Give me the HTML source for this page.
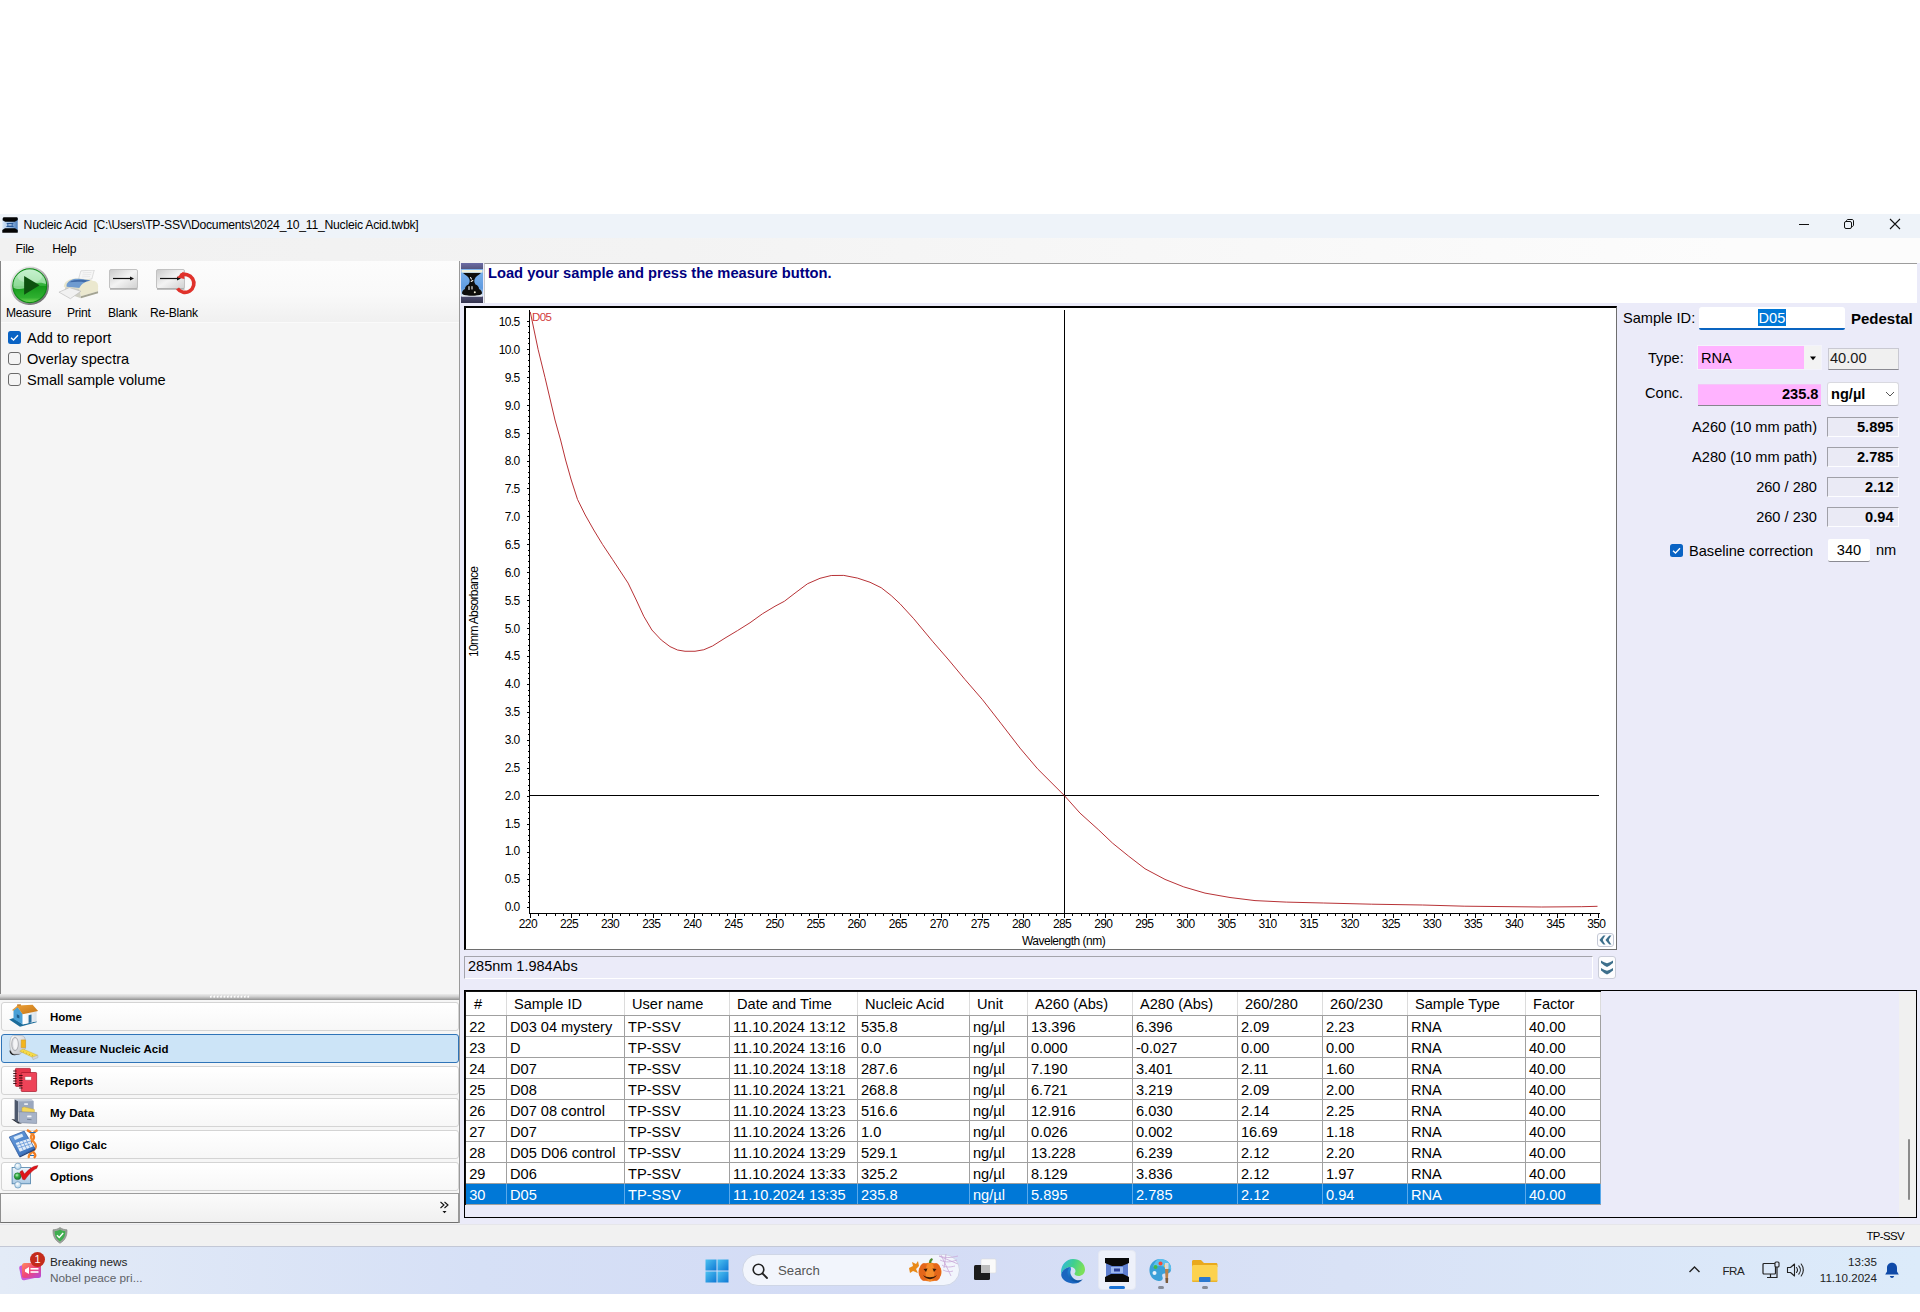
<!DOCTYPE html>
<html><head><meta charset="utf-8"><title>Nucleic Acid</title>
<style>
html,body{margin:0;padding:0;}
body{width:1920px;height:1312px;position:relative;background:#fff;overflow:hidden;font-family:"Liberation Sans",sans-serif;color:#000;}
.a{position:absolute;}
.t{position:absolute;white-space:pre;line-height:1;}
.f{font-size:14.6px;}
.b{font-weight:bold;}
.vb{position:absolute;background:#f0f0f0;border:1px solid #c9c9d2;border-bottom-color:#8a8a92;box-sizing:border-box;}
.ax{font-size:12px;letter-spacing:-0.65px;}
.nav{position:absolute;left:1px;width:458px;height:28px;border:1px solid #d4d4d4;border-radius:3px;background:linear-gradient(#ffffff,#f7f7f7);box-sizing:border-box;}
.nav span{position:absolute;left:48px;top:9px;font-size:11.5px;font-weight:bold;line-height:1;white-space:pre;}
table{border-collapse:collapse;}
</style></head><body>
<div class="a" style="left:0;top:214px;width:1920px;height:24px;background:#eef3f9"></div><div class="t" style="left:23.6px;top:219.4px;font-size:12.2px;letter-spacing:-0.24px;">Nucleic Acid&nbsp; [C:\Users\TP-SSV\Documents\2024_10_11_Nucleic Acid.twbk]</div><div class="a" style="left:0;top:238px;width:1920px;height:25px;background:linear-gradient(90deg,#f1f1f1,#f3f3f3 35%,#fcfcfc 90%)"></div><div class="t" style="left:15.6px;top:242.6px;font-size:12.2px;letter-spacing:-0.3px;">File</div><div class="t" style="left:52.3px;top:242.6px;font-size:12.2px;letter-spacing:-0.3px;">Help</div><div class="a" style="left:460px;top:263px;width:1460px;height:962px;background:#ebebf9"></div><div class="a" style="left:0;top:261px;width:460px;height:964px;background:#f5f5f5"></div><div class="a" style="left:0;top:261px;width:459px;height:61px;background:linear-gradient(#fcfcfc,#f9f9f9 55%,#f0f0f0)"></div><div class="a" style="left:0;top:322px;width:459px;height:1px;background:#fafafa"></div><div class="a" style="left:0;top:261px;width:1px;height:733px;background:#858585"></div><div class="a" style="left:459px;top:261px;width:1px;height:964px;background:#9a9a9a"></div><svg class="a" style="left:2px;top:217px" width="16" height="16" viewBox="0 0 16 16">
<defs><linearGradient id="ai" x1="0" y1="0" x2="1" y2="0"><stop offset="0" stop-color="#d6e6f8"/><stop offset="0.5" stop-color="#9dbfe6"/><stop offset="1" stop-color="#4f80bc"/></linearGradient></defs>
<rect x="0.400" y="1" width="15.300" height="14" fill="url(#ai)"/>
<path d="M1.800 0.200H14.400C15.300 0.200 15.700 0.700 15.700 1.500V3L12.800 4.800H3.200L0.600 3.200C0.600 1.500 0.900 0.200 1.800 0.200Z" fill="#040404"/>
<path d="M0.300 15.800V12.900L3 11.200H13L15.700 12.900V15.800Z" fill="#040404"/>
<path d="M4.200 6H11.800L10.600 7.300V8.700L12.200 10H3.800L5.400 8.700V7.300Z" fill="#2a5c9c"/>
<rect x="6.300" y="7.300" width="3.400" height="1.200" fill="#d6e6f8"/>
</svg><svg class="a" style="left:9.5px;top:265.5px" width="39.500" height="39.500" viewBox="0 0 42 42">
<defs><linearGradient id="gr" x1="0.15" y1="0.1" x2="0.85" y2="0.95"><stop offset="0" stop-color="#ececec"/><stop offset="0.5" stop-color="#a8a8a8"/><stop offset="1" stop-color="#6a6a6a"/></linearGradient>
<linearGradient id="gm" x1="0" y1="0" x2="0" y2="1"><stop offset="0" stop-color="#8fe0a0"/><stop offset="0.5" stop-color="#2fae36"/><stop offset="0.52" stop-color="#169a1c"/><stop offset="0.85" stop-color="#2fb030"/><stop offset="1" stop-color="#7fdc5c"/></linearGradient>
<clipPath id="gc"><circle cx="21" cy="21" r="17.500"/></clipPath></defs>
<circle cx="21" cy="21" r="20.500" fill="url(#gr)"/>
<circle cx="21" cy="21" r="18" fill="url(#gm)" stroke="#0e8a16" stroke-width="1.200"/>
<g clip-path="url(#gc)"><path d="M2 22C8 26 14 25 21 21C28 17 34 17 40 20V2H2Z" fill="#c9f5d2" opacity="0.620"/>
<ellipse cx="21" cy="11" rx="13" ry="7" fill="#fff" opacity="0.250"/></g>
<path d="M15 10.500L31.500 20.500L15 30.500Z" fill="#0d520f"/>
</svg><svg class="a" style="left:58px;top:270px" width="42" height="29.500" viewBox="0 0 44 36" preserveAspectRatio="none">
<path d="M24 1L38 0L35.500 11L21 13Z" fill="#f6f6f6" stroke="#c4c4c4" stroke-width="0.600"/>
<path d="M26 3.500L35 3M25.500 6L34.500 5.500M25 8.500L33.500 8" stroke="#dcdcdc" stroke-width="0.600"/>
<path d="M6 20C7 13 13 10 22 10.500L33 11.500L36 13L24 24L8 22Z" fill="#e9e6cc"/>
<path d="M9 18C11 12 17 10 24 11L34 12.500L23 22L9 20.500Z" fill="#6f9bd0"/>
<path d="M12 15C16 12 22 11.500 30 12.500L33 13L28 15C22 14 17 14.500 12 15Z" fill="#3f6aa8"/>
<path d="M22 23C24 16 30 13 36 13C41 13 42 17 42 20L42 26L24 32Z" fill="#ebe8cf"/>
<path d="M24 32L42 26L42 28.500L24 34.500Z" fill="#a3a392"/>
<path d="M8 21L22 23L24 32L24 34.500L6 27Z" fill="#cfcfc4"/>
<path d="M1 27L12 21.500L24 26L13 35Z" fill="#f1f1f1" stroke="#b9b9b9" stroke-width="0.700"/>
</svg><svg class="a" style="left:109px;top:269px" width="30" height="24" viewBox="0 0 30 24">
<defs><linearGradient id="gb" x1="0" y1="0" x2="1" y2="1"><stop offset="0" stop-color="#c9c9c9"/><stop offset="0.5" stop-color="#f3f3f3"/><stop offset="1" stop-color="#d0d0d0"/></linearGradient></defs>
<rect x="0.5" y="0.5" width="28" height="19" rx="1.5" fill="url(#gb)" stroke="#c2c2c2"/>
<rect x="1" y="19" width="27.5" height="2" fill="#a8a8a8" opacity="0.7"/>
<path d="M4 9.5H22" stroke="#111" stroke-width="1.2"/><path d="M21 7.5L25 9.5L21 11.5Z" fill="#111"/>
</svg><svg class="a" style="left:155.7px;top:267.6px" width="42" height="30" viewBox="0 0 42 30">
<rect x="0.5" y="1.5" width="28" height="19" rx="1.5" fill="url(#gb)" stroke="#c2c2c2"/>
<rect x="1" y="20" width="27.5" height="2" fill="#a8a8a8" opacity="0.7"/>
<path d="M4 10.5H22" stroke="#111" stroke-width="1.2"/><path d="M21 8.5L25 10.5L21 12.5Z" fill="#111"/>
<path d="M24.5 7.5A9 9 0 1 1 21.5 20.5" fill="none" stroke="#e0322b" stroke-width="3.6"/>
<path d="M21 9.5L27.5 3.5L28.5 11Z" fill="#e0322b"/>
</svg><div class="t" style="left:6px;top:306.6px;font-size:12.1px;letter-spacing:-0.25px;">Measure</div><div class="t" style="left:67px;top:306.6px;font-size:12.1px;letter-spacing:-0.25px;">Print</div><div class="t" style="left:108px;top:306.6px;font-size:12.1px;letter-spacing:-0.25px;">Blank</div><div class="t" style="left:150px;top:306.6px;font-size:12.1px;letter-spacing:-0.25px;">Re-Blank</div><svg class="a" style="left:8px;top:331px" width="13" height="13" viewBox="0 0 13 13"><rect width="13" height="13" rx="2.5" fill="#0a63c4"/><path d="M3 6.7L5.5 9L10 4.3" fill="none" stroke="#fff" stroke-width="1.3"/></svg><div class="a" style="left:8px;top:352px;width:13px;height:13px;box-sizing:border-box;border:1px solid #6a6a6a;border-radius:3px;background:#f4f4f4"></div><div class="a" style="left:8px;top:373px;width:13px;height:13px;box-sizing:border-box;border:1px solid #6a6a6a;border-radius:3px;background:#f4f4f4"></div><div class="t f" style="left:27px;top:331px;">Add to report</div><div class="t f" style="left:27px;top:352px;">Overlay spectra</div><div class="t f" style="left:27px;top:373px;">Small sample volume</div><div class="a" style="left:484px;top:263px;width:1433px;height:40px;background:#fff;border-top:1px solid #9d9d9d;border-left:1px solid #c8c8c8;box-sizing:border-box"></div><svg class="a" style="left:461px;top:263px" width="22" height="40" viewBox="0 0 22 40">
<defs><linearGradient id="pi1" x1="0" y1="0" x2="0" y2="1"><stop offset="0" stop-color="#6c6ca6"/><stop offset="1" stop-color="#56567e"/></linearGradient>
<linearGradient id="pi2" x1="0" y1="0" x2="0" y2="1"><stop offset="0" stop-color="#4c4c70"/><stop offset="1" stop-color="#34344e"/></linearGradient>
<linearGradient id="pi3" x1="0" y1="0" x2="0" y2="1"><stop offset="0" stop-color="#7fb4ee"/><stop offset="0.7" stop-color="#5f9be0"/><stop offset="1" stop-color="#dfe9f3"/></linearGradient></defs>
<rect width="22" height="6" fill="url(#pi1)"/>
<rect y="6" width="22" height="27.500" fill="url(#pi3)"/>
<rect y="33.500" width="22" height="6.500" fill="url(#pi2)"/>
<rect x="0.500" y="7" width="21" height="2.600" fill="#f1efd9"/>
<path d="M2 10H20C17 12.500 14.500 13.500 13.500 16.500C13 18.500 13.500 20 14.500 21.500C17 22.500 18 24 18 26C20 27 21 28.500 21 30C21 32 17 33 11 33C5 33 1 32 1 30C1 28.500 2 27 4 26C4 24 5 22.500 7.500 21.500C8.500 20 9 18.500 8.500 16.500C7.500 13.500 5 12.500 2 10Z" fill="#0e0d0c"/>
<path d="M9.500 14.500L10.500 16M10.200 18.500L11.800 17.500M8 23.500V26.500M11 23.500V26" stroke="#f4f4f4" stroke-width="1.100" stroke-linecap="round"/>
<circle cx="13.800" cy="29.200" r="1" fill="#f7f1d8"/>
<path d="M1 31.500C3 33.200 19 33.200 21 31.500V33.500H1Z" fill="#e9edf2"/>
</svg><div class="t b" style="left:488px;top:266px;font-size:14.7px;color:#000080;">Load your sample and press the measure button.</div><div class="a" style="left:464px;top:306px;width:1153px;height:644px;background:#fff;border-top:2px solid #000;border-left:2px solid #000;border-right:1px solid #6e6e6e;border-bottom:1px solid #6e6e6e;box-sizing:border-box"></div><svg class="a" style="left:0;top:0" width="1920" height="1312" viewBox="0 0 1920 1312" shape-rendering="crispEdges"><path d="M529.5 310V913.5H1599.5" fill="none" stroke="#000" stroke-width="1"/><path d="M527 907.5H529M528 902.5H529M528 896.5H529M528 891.5H529M528 885.5H529M527 879.5H529M528 874.5H529M528 868.5H529M528 863.5H529M528 857.5H529M527 852.5H529M528 846.5H529M528 840.5H529M528 835.5H529M528 829.5H529M527 824.5H529M528 818.5H529M528 812.5H529M528 807.5H529M528 801.5H529M527 796.5H529M528 790.5H529M528 785.5H529M528 779.5H529M528 773.5H529M527 768.5H529M528 762.5H529M528 757.5H529M528 751.5H529M528 745.5H529M527 740.5H529M528 734.5H529M528 729.5H529M528 723.5H529M528 717.5H529M527 712.5H529M528 706.5H529M528 701.5H529M528 695.5H529M528 690.5H529M527 684.5H529M528 678.5H529M528 673.5H529M528 667.5H529M528 662.5H529M527 656.5H529M528 650.5H529M528 645.5H529M528 639.5H529M528 634.5H529M527 628.5H529M528 623.5H529M528 617.5H529M528 611.5H529M528 606.5H529M527 600.5H529M528 595.5H529M528 589.5H529M528 583.5H529M528 578.5H529M527 572.5H529M528 567.5H529M528 561.5H529M528 555.5H529M528 550.5H529M527 544.5H529M528 539.5H529M528 533.5H529M528 528.5H529M528 522.5H529M527 516.5H529M528 511.5H529M528 505.5H529M528 500.5H529M528 494.5H529M527 488.5H529M528 483.5H529M528 477.5H529M528 472.5H529M528 466.5H529M527 461.5H529M528 455.5H529M528 449.5H529M528 444.5H529M528 438.5H529M527 433.5H529M528 427.5H529M528 421.5H529M528 416.5H529M528 410.5H529M527 405.5H529M528 399.5H529M528 393.5H529M528 388.5H529M528 382.5H529M527 377.5H529M528 371.5H529M528 366.5H529M528 360.5H529M528 354.5H529M527 349.5H529M528 343.5H529M528 338.5H529M528 332.5H529M528 326.5H529M527 321.5H529M530.5 914V918M538.5 914V916M546.5 914V916M555.5 914V916M563.5 914V916M571.5 914V918M579.5 914V916M587.5 914V916M596.5 914V916M604.5 914V916M612.5 914V918M620.5 914V916M629.5 914V916M637.5 914V916M645.5 914V916M653.5 914V918M661.5 914V916M670.5 914V916M678.5 914V916M686.5 914V916M694.5 914V918M702.5 914V916M711.5 914V916M719.5 914V916M727.5 914V916M735.5 914V918M744.5 914V916M752.5 914V916M760.5 914V916M768.5 914V916M776.5 914V918M785.5 914V916M793.5 914V916M801.5 914V916M809.5 914V916M818.5 914V918M826.5 914V916M834.5 914V916M842.5 914V916M850.5 914V916M859.5 914V918M867.5 914V916M875.5 914V916M883.5 914V916M892.5 914V916M900.5 914V918M908.5 914V916M916.5 914V916M924.5 914V916M933.5 914V916M941.5 914V918M949.5 914V916M957.5 914V916M965.5 914V916M974.5 914V916M982.5 914V918M990.5 914V916M998.5 914V916M1007.5 914V916M1015.5 914V916M1023.5 914V918M1031.5 914V916M1039.5 914V916M1048.5 914V916M1056.5 914V916M1064.5 914V918M1072.5 914V916M1081.5 914V916M1089.5 914V916M1097.5 914V916M1105.5 914V918M1113.5 914V916M1122.5 914V916M1130.5 914V916M1138.5 914V916M1146.5 914V918M1155.5 914V916M1163.5 914V916M1171.5 914V916M1179.5 914V916M1187.5 914V918M1196.5 914V916M1204.5 914V916M1212.5 914V916M1220.5 914V916M1228.5 914V918M1237.5 914V916M1245.5 914V916M1253.5 914V916M1261.5 914V916M1270.5 914V918M1278.5 914V916M1286.5 914V916M1294.5 914V916M1302.5 914V916M1311.5 914V918M1319.5 914V916M1327.5 914V916M1335.5 914V916M1344.5 914V916M1352.5 914V918M1360.5 914V916M1368.5 914V916M1376.5 914V916M1385.5 914V916M1393.5 914V918M1401.5 914V916M1409.5 914V916M1417.5 914V916M1426.5 914V916M1434.5 914V918M1442.5 914V916M1450.5 914V916M1459.5 914V916M1467.5 914V916M1475.5 914V918M1483.5 914V916M1491.5 914V916M1500.5 914V916M1508.5 914V916M1516.5 914V918M1524.5 914V916M1533.5 914V916M1541.5 914V916M1549.5 914V916M1557.5 914V918M1565.5 914V916M1574.5 914V916M1582.5 914V916M1590.5 914V916M1598.5 914V918" stroke="#000" stroke-width="1" fill="none"/><path d="M1064.5 310V913M530 795.5H1599" stroke="#000" stroke-width="1" fill="none"/></svg><svg class="a" style="left:0;top:0" width="1920" height="1312" viewBox="0 0 1920 1312"><polyline fill="none" stroke="#b3272b" stroke-width="0.95" points="530.25,311.9 538.1,349.4 545,377.5 555,420 560.6,440 565.6,460 571.25,480 577.5,499.4 585.25,515 593.75,530 602.5,544.4 612.5,559.4 628.1,583.1 636.25,600 643.75,616.25 651.9,630 661.25,640 670,646.6 677.5,650 685,651.25 695,651.25 703.75,649.75 712.5,646 725,638.1 737.5,630.6 750,622.75 762.5,613.75 775,606.25 784.4,601.25 795,593.1 807.5,583.75 820,578.3 831.25,575.5 843.75,575.4 857.5,578.1 870,582.25 881.25,587.75 891.25,595.6 900,603.75 913.75,618.75 932.5,641.25 948.75,660 965,679.5 982.5,699.7 1001.25,723.75 1020,748.1 1037.5,768.75 1064.4,795.6 1080,813.1 1098.75,830 1112.5,843.1 1128.75,856.25 1145,868.75 1165,879.4 1183.75,886.9 1205,893.1 1230,897.5 1255,900.6 1286.25,902.1 1323.3,903 1371.7,904.2 1422.5,905 1464.2,906.2 1541.7,907 1581.7,906.7 1597.5,906.3"/></svg><div class="t ax" style="left:478.5px;width:41px;text-align:right;top:901.0px;">0.0</div><div class="t ax" style="left:478.5px;width:41px;text-align:right;top:873.2px;">0.5</div><div class="t ax" style="left:478.5px;width:41px;text-align:right;top:845.3px;">1.0</div><div class="t ax" style="left:478.5px;width:41px;text-align:right;top:817.5px;">1.5</div><div class="t ax" style="left:478.5px;width:41px;text-align:right;top:789.6px;">2.0</div><div class="t ax" style="left:478.5px;width:41px;text-align:right;top:761.8px;">2.5</div><div class="t ax" style="left:478.5px;width:41px;text-align:right;top:733.9px;">3.0</div><div class="t ax" style="left:478.5px;width:41px;text-align:right;top:706.0px;">3.5</div><div class="t ax" style="left:478.5px;width:41px;text-align:right;top:678.2px;">4.0</div><div class="t ax" style="left:478.5px;width:41px;text-align:right;top:650.3px;">4.5</div><div class="t ax" style="left:478.5px;width:41px;text-align:right;top:622.5px;">5.0</div><div class="t ax" style="left:478.5px;width:41px;text-align:right;top:594.6px;">5.5</div><div class="t ax" style="left:478.5px;width:41px;text-align:right;top:566.8px;">6.0</div><div class="t ax" style="left:478.5px;width:41px;text-align:right;top:538.9px;">6.5</div><div class="t ax" style="left:478.5px;width:41px;text-align:right;top:511.0px;">7.0</div><div class="t ax" style="left:478.5px;width:41px;text-align:right;top:483.2px;">7.5</div><div class="t ax" style="left:478.5px;width:41px;text-align:right;top:455.3px;">8.0</div><div class="t ax" style="left:478.5px;width:41px;text-align:right;top:427.5px;">8.5</div><div class="t ax" style="left:478.5px;width:41px;text-align:right;top:399.6px;">9.0</div><div class="t ax" style="left:478.5px;width:41px;text-align:right;top:371.8px;">9.5</div><div class="t ax" style="left:478.5px;width:41px;text-align:right;top:343.9px;">10.0</div><div class="t ax" style="left:478.5px;width:41px;text-align:right;top:316.0px;">10.5</div><div class="t ax" style="left:507.9px;width:40px;text-align:center;top:918px;">220</div><div class="t ax" style="left:549.0px;width:40px;text-align:center;top:918px;">225</div><div class="t ax" style="left:590.1px;width:40px;text-align:center;top:918px;">230</div><div class="t ax" style="left:631.2px;width:40px;text-align:center;top:918px;">235</div><div class="t ax" style="left:672.3px;width:40px;text-align:center;top:918px;">240</div><div class="t ax" style="left:713.4px;width:40px;text-align:center;top:918px;">245</div><div class="t ax" style="left:754.5px;width:40px;text-align:center;top:918px;">250</div><div class="t ax" style="left:795.5px;width:40px;text-align:center;top:918px;">255</div><div class="t ax" style="left:836.6px;width:40px;text-align:center;top:918px;">260</div><div class="t ax" style="left:877.7px;width:40px;text-align:center;top:918px;">265</div><div class="t ax" style="left:918.8px;width:40px;text-align:center;top:918px;">270</div><div class="t ax" style="left:959.9px;width:40px;text-align:center;top:918px;">275</div><div class="t ax" style="left:1001.0px;width:40px;text-align:center;top:918px;">280</div><div class="t ax" style="left:1042.1px;width:40px;text-align:center;top:918px;">285</div><div class="t ax" style="left:1083.2px;width:40px;text-align:center;top:918px;">290</div><div class="t ax" style="left:1124.3px;width:40px;text-align:center;top:918px;">295</div><div class="t ax" style="left:1165.4px;width:40px;text-align:center;top:918px;">300</div><div class="t ax" style="left:1206.5px;width:40px;text-align:center;top:918px;">305</div><div class="t ax" style="left:1247.6px;width:40px;text-align:center;top:918px;">310</div><div class="t ax" style="left:1288.7px;width:40px;text-align:center;top:918px;">315</div><div class="t ax" style="left:1329.8px;width:40px;text-align:center;top:918px;">320</div><div class="t ax" style="left:1370.8px;width:40px;text-align:center;top:918px;">325</div><div class="t ax" style="left:1411.9px;width:40px;text-align:center;top:918px;">330</div><div class="t ax" style="left:1453.0px;width:40px;text-align:center;top:918px;">335</div><div class="t ax" style="left:1494.1px;width:40px;text-align:center;top:918px;">340</div><div class="t ax" style="left:1535.2px;width:40px;text-align:center;top:918px;">345</div><div class="t ax" style="left:1576.3px;width:40px;text-align:center;top:918px;">350</div><div class="t ax" style="left:1022px;top:935px;letter-spacing:-0.52px">Wavelength (nm)</div><div class="t ax" style="left:468px;top:605px;width:12px;height:12px;"><div style="position:absolute;left:0;top:0;transform-origin:0 0;transform:translate(0px,52px) rotate(-90deg);white-space:pre">10mm Absorbance</div></div><div class="t" style="left:532px;top:311.5px;font-size:11.5px;letter-spacing:-0.6px;color:#d23a3a;">D05</div><div class="a" style="left:1597px;top:933px;width:17px;height:14px;border:1px solid #c5c9d6;border-radius:3px;background:#fdfdfe;box-sizing:border-box"></div>
<svg class="a" style="left:1598px;top:934px" width="15" height="12" viewBox="0 0 15 12"><path d="M5.5 1.5C3.5 3.5 2.5 4.5 1.5 6C2.5 7.5 3.5 8.5 5.5 10.5H7.5C6 8.5 5.2 7.5 4.8 6C5.2 4.5 6 3.5 7.5 1.5ZM11.5 1.5C9.5 3.5 8.5 4.5 7.5 6C8.5 7.5 9.5 8.5 11.5 10.5H13.5C12 8.5 11.2 7.5 10.8 6C11.2 4.5 12 3.5 13.5 1.5Z" fill="#3d6f8c"/></svg><div class="a" style="left:464px;top:956px;width:1129px;height:23px;background:#ebebf9;border-top:1px solid #a4a4ac;border-left:1px solid #a4a4ac;border-bottom:1px solid #fff;border-right:1px solid #fff;box-sizing:border-box"></div><div class="t" style="left:468px;top:959px;font-size:14.5px;">285nm 1.984Abs</div><div class="a" style="left:1598px;top:956px;width:18px;height:23px;border:1px solid #c9ccd8;border-radius:3px;background:#fdfdfe;box-sizing:border-box"></div>
<svg class="a" style="left:1599px;top:957px" width="16" height="21" viewBox="0 0 16 21"><path d="M2 3.5C4.5 5 6 5.8 8 6.3C10 5.8 11.5 5 14 3.5V6C11.5 8 10 9 8 10C6 9 4.5 8 2 6ZM2 11C4.5 12.5 6 13.3 8 13.8C10 13.3 11.5 12.5 14 11V13.5C11.5 15.5 10 16.5 8 17.5C6 16.5 4.5 15.5 2 13.5Z" fill="#3d6f8c"/></svg><div class="t f" style="left:1623px;top:311px;">Sample ID:</div><div class="a" style="left:1699px;top:307px;width:146px;height:23px;background:#fff;border-bottom:2px solid #0a64c0;border-radius:3px 3px 2px 2px;box-sizing:border-box"></div><div class="a" style="left:1758px;top:309px;width:28px;height:17px;background:#0078d7"></div><div class="t f" style="left:1758.5px;top:311px;color:#fff;">D05</div><div class="t f b" style="left:1851px;top:311px;font-size:15px">Pedestal</div><div class="t f" style="left:1648px;top:351px;">Type:</div><div class="a" style="left:1697px;top:345px;width:125px;height:25px;background:#f3f3f3;border:1px solid #f3f3fb;box-sizing:border-box"></div><div class="a" style="left:1698px;top:346px;width:106px;height:23px;background:#ffb3ff"></div><div class="t f" style="left:1701px;top:351px;">RNA</div><svg class="a" style="left:1809px;top:355.5px" width="8" height="5" viewBox="0 0 8 5"><path d="M1 0.5H7L4 4.2Z" fill="#000"/></svg><div class="vb" style="left:1828px;top:348px;width:71px;height:22px;"></div><div class="t f" style="left:1830px;top:351px;color:#1a1a1a">40.00</div><div class="t f" style="left:1645px;top:386px;">Conc.</div><div class="a" style="left:1698px;top:384px;width:123px;height:22px;background:#ffb3ff;border-bottom:1px solid #86868e;border-top:1px solid #f4c6f8;box-sizing:border-box"></div><div class="t f b" style="left:1720px;width:98.5px;text-align:right;top:387px;">235.8</div><div class="a" style="left:1827px;top:382px;width:72px;height:24px;background:#fff;border:1px solid #d9d9e0;border-bottom-color:#b8b8c0;border-radius:3px;box-sizing:border-box"></div><div class="t f b" style="left:1831px;top:387px;">ng/µl</div><svg class="a" style="left:1885px;top:391px" width="10" height="6" viewBox="0 0 10 6"><path d="M1 1L5 5L9 1" fill="none" stroke="#555" stroke-width="1"/></svg><div class="t f" style="left:1660px;width:157px;text-align:right;top:420px;">A260 (10 mm path)</div><div class="vb" style="left:1827px;top:417px;width:72px;height:20px;background:#eaeaf5;border-color:#a0a0a8 #fdfdff #fdfdff #a0a0a8"></div><div class="t f b" style="left:1830px;width:63.5px;text-align:right;top:420px;">5.895</div><div class="t f" style="left:1660px;width:157px;text-align:right;top:450px;">A280 (10 mm path)</div><div class="vb" style="left:1827px;top:447px;width:72px;height:20px;background:#eaeaf5;border-color:#a0a0a8 #fdfdff #fdfdff #a0a0a8"></div><div class="t f b" style="left:1830px;width:63.5px;text-align:right;top:450px;">2.785</div><div class="t f" style="left:1660px;width:157px;text-align:right;top:480px;">260 / 280</div><div class="vb" style="left:1827px;top:477px;width:72px;height:20px;background:#eaeaf5;border-color:#a0a0a8 #fdfdff #fdfdff #a0a0a8"></div><div class="t f b" style="left:1830px;width:63.5px;text-align:right;top:480px;">2.12</div><div class="t f" style="left:1660px;width:157px;text-align:right;top:510px;">260 / 230</div><div class="vb" style="left:1827px;top:507px;width:72px;height:20px;background:#eaeaf5;border-color:#a0a0a8 #fdfdff #fdfdff #a0a0a8"></div><div class="t f b" style="left:1830px;width:63.5px;text-align:right;top:510px;">0.94</div><svg class="a" style="left:1670px;top:544px" width="13" height="13" viewBox="0 0 13 13"><rect width="13" height="13" rx="2.5" fill="#0a63c4"/><path d="M3 6.7L5.5 9L10 4.3" fill="none" stroke="#fff" stroke-width="1.3"/></svg><div class="t f" style="left:1689px;top:543.5px;">Baseline correction</div><div class="a" style="left:1828px;top:539px;width:42px;height:23px;background:#fff;border-bottom:1px solid #8a8a92;border-radius:2px;box-sizing:border-box"></div><div class="t f" style="left:1828px;width:42px;text-align:center;top:543px;">340</div><div class="t f" style="left:1876px;top:543px;">nm</div><div class="a" style="left:464px;top:990px;width:1453px;height:228px;background:#ebebf9;border:1px solid #000;box-sizing:border-box"></div><div class="a" style="left:465px;top:991px;width:1136px;height:1px;background:#111"></div><div class="a" style="left:465px;top:991px;width:1px;height:214px;background:#111"></div><div class="a" style="left:1899px;top:992px;width:17px;height:225px;background:#f0f0f0"></div><div class="a" style="left:1908px;top:1139px;width:2px;height:61px;background:#8b8b8b;border-radius:1px"></div><div class="a" style="left:466px;top:992px;width:1135px;height:213px;background:#fff"></div><div class="a" style="left:466px;top:1184px;width:1135px;height:21px;background:#0078d7"></div><div class="a" style="left:506px;top:992px;width:1px;height:23px;background:#dcdcdc"></div><div class="a" style="left:506px;top:1015px;width:1px;height:190px;background:#a0a0a0"></div><div class="a" style="left:506px;top:1184px;width:1px;height:20px;background:#5aa9ea"></div><div class="a" style="left:624px;top:992px;width:1px;height:23px;background:#dcdcdc"></div><div class="a" style="left:624px;top:1015px;width:1px;height:190px;background:#a0a0a0"></div><div class="a" style="left:624px;top:1184px;width:1px;height:20px;background:#5aa9ea"></div><div class="a" style="left:729px;top:992px;width:1px;height:23px;background:#dcdcdc"></div><div class="a" style="left:729px;top:1015px;width:1px;height:190px;background:#a0a0a0"></div><div class="a" style="left:729px;top:1184px;width:1px;height:20px;background:#5aa9ea"></div><div class="a" style="left:857px;top:992px;width:1px;height:23px;background:#dcdcdc"></div><div class="a" style="left:857px;top:1015px;width:1px;height:190px;background:#a0a0a0"></div><div class="a" style="left:857px;top:1184px;width:1px;height:20px;background:#5aa9ea"></div><div class="a" style="left:969px;top:992px;width:1px;height:23px;background:#dcdcdc"></div><div class="a" style="left:969px;top:1015px;width:1px;height:190px;background:#a0a0a0"></div><div class="a" style="left:969px;top:1184px;width:1px;height:20px;background:#5aa9ea"></div><div class="a" style="left:1027px;top:992px;width:1px;height:23px;background:#dcdcdc"></div><div class="a" style="left:1027px;top:1015px;width:1px;height:190px;background:#a0a0a0"></div><div class="a" style="left:1027px;top:1184px;width:1px;height:20px;background:#5aa9ea"></div><div class="a" style="left:1132px;top:992px;width:1px;height:23px;background:#dcdcdc"></div><div class="a" style="left:1132px;top:1015px;width:1px;height:190px;background:#a0a0a0"></div><div class="a" style="left:1132px;top:1184px;width:1px;height:20px;background:#5aa9ea"></div><div class="a" style="left:1237px;top:992px;width:1px;height:23px;background:#dcdcdc"></div><div class="a" style="left:1237px;top:1015px;width:1px;height:190px;background:#a0a0a0"></div><div class="a" style="left:1237px;top:1184px;width:1px;height:20px;background:#5aa9ea"></div><div class="a" style="left:1322px;top:992px;width:1px;height:23px;background:#dcdcdc"></div><div class="a" style="left:1322px;top:1015px;width:1px;height:190px;background:#a0a0a0"></div><div class="a" style="left:1322px;top:1184px;width:1px;height:20px;background:#5aa9ea"></div><div class="a" style="left:1407px;top:992px;width:1px;height:23px;background:#dcdcdc"></div><div class="a" style="left:1407px;top:1015px;width:1px;height:190px;background:#a0a0a0"></div><div class="a" style="left:1407px;top:1184px;width:1px;height:20px;background:#5aa9ea"></div><div class="a" style="left:1525px;top:992px;width:1px;height:23px;background:#dcdcdc"></div><div class="a" style="left:1525px;top:1015px;width:1px;height:190px;background:#a0a0a0"></div><div class="a" style="left:1525px;top:1184px;width:1px;height:20px;background:#5aa9ea"></div><div class="a" style="left:1600px;top:992px;width:1px;height:23px;background:#dcdcdc"></div><div class="a" style="left:1600px;top:1015px;width:1px;height:190px;background:#a0a0a0"></div><div class="a" style="left:1600px;top:1184px;width:1px;height:20px;background:#5aa9ea"></div><div class="a" style="left:466px;top:1015px;width:1135px;height:1px;background:#a0a0a0"></div><div class="a" style="left:466px;top:1036px;width:1135px;height:1px;background:#a0a0a0"></div><div class="a" style="left:466px;top:1057px;width:1135px;height:1px;background:#a0a0a0"></div><div class="a" style="left:466px;top:1078px;width:1135px;height:1px;background:#a0a0a0"></div><div class="a" style="left:466px;top:1099px;width:1135px;height:1px;background:#a0a0a0"></div><div class="a" style="left:466px;top:1120px;width:1135px;height:1px;background:#a0a0a0"></div><div class="a" style="left:466px;top:1141px;width:1135px;height:1px;background:#a0a0a0"></div><div class="a" style="left:466px;top:1162px;width:1135px;height:1px;background:#a0a0a0"></div><div class="a" style="left:466px;top:1183px;width:1135px;height:1px;background:#a0a0a0"></div><div class="a" style="left:466px;top:1204px;width:1135px;height:1px;background:#a0a0a0"></div><div class="t f" style="left:474px;top:997px;">#</div><div class="t f" style="left:514px;top:997px;">Sample ID</div><div class="t f" style="left:632px;top:997px;">User name</div><div class="t f" style="left:737px;top:997px;">Date and Time</div><div class="t f" style="left:865px;top:997px;">Nucleic Acid</div><div class="t f" style="left:977px;top:997px;">Unit</div><div class="t f" style="left:1035px;top:997px;">A260 (Abs)</div><div class="t f" style="left:1140px;top:997px;">A280 (Abs)</div><div class="t f" style="left:1245px;top:997px;">260/280</div><div class="t f" style="left:1330px;top:997px;">260/230</div><div class="t f" style="left:1415px;top:997px;">Sample Type</div><div class="t f" style="left:1533px;top:997px;">Factor</div><div class="t f" style="left:469.2px;top:1020px;color:#000">22</div><div class="t f" style="left:510px;top:1020px;color:#000">D03 04 mystery</div><div class="t f" style="left:628px;top:1020px;color:#000">TP-SSV</div><div class="t f" style="left:733px;top:1020px;color:#000">11.10.2024 13:12</div><div class="t f" style="left:861px;top:1020px;color:#000">535.8</div><div class="t f" style="left:973px;top:1020px;color:#000">ng/µl</div><div class="t f" style="left:1031px;top:1020px;color:#000">13.396</div><div class="t f" style="left:1136px;top:1020px;color:#000">6.396</div><div class="t f" style="left:1241px;top:1020px;color:#000">2.09</div><div class="t f" style="left:1326px;top:1020px;color:#000">2.23</div><div class="t f" style="left:1411px;top:1020px;color:#000">RNA</div><div class="t f" style="left:1529px;top:1020px;color:#000">40.00</div><div class="t f" style="left:469.2px;top:1041px;color:#000">23</div><div class="t f" style="left:510px;top:1041px;color:#000">D</div><div class="t f" style="left:628px;top:1041px;color:#000">TP-SSV</div><div class="t f" style="left:733px;top:1041px;color:#000">11.10.2024 13:16</div><div class="t f" style="left:861px;top:1041px;color:#000">0.0</div><div class="t f" style="left:973px;top:1041px;color:#000">ng/µl</div><div class="t f" style="left:1031px;top:1041px;color:#000">0.000</div><div class="t f" style="left:1136px;top:1041px;color:#000">-0.027</div><div class="t f" style="left:1241px;top:1041px;color:#000">0.00</div><div class="t f" style="left:1326px;top:1041px;color:#000">0.00</div><div class="t f" style="left:1411px;top:1041px;color:#000">RNA</div><div class="t f" style="left:1529px;top:1041px;color:#000">40.00</div><div class="t f" style="left:469.2px;top:1062px;color:#000">24</div><div class="t f" style="left:510px;top:1062px;color:#000">D07</div><div class="t f" style="left:628px;top:1062px;color:#000">TP-SSV</div><div class="t f" style="left:733px;top:1062px;color:#000">11.10.2024 13:18</div><div class="t f" style="left:861px;top:1062px;color:#000">287.6</div><div class="t f" style="left:973px;top:1062px;color:#000">ng/µl</div><div class="t f" style="left:1031px;top:1062px;color:#000">7.190</div><div class="t f" style="left:1136px;top:1062px;color:#000">3.401</div><div class="t f" style="left:1241px;top:1062px;color:#000">2.11</div><div class="t f" style="left:1326px;top:1062px;color:#000">1.60</div><div class="t f" style="left:1411px;top:1062px;color:#000">RNA</div><div class="t f" style="left:1529px;top:1062px;color:#000">40.00</div><div class="t f" style="left:469.2px;top:1083px;color:#000">25</div><div class="t f" style="left:510px;top:1083px;color:#000">D08</div><div class="t f" style="left:628px;top:1083px;color:#000">TP-SSV</div><div class="t f" style="left:733px;top:1083px;color:#000">11.10.2024 13:21</div><div class="t f" style="left:861px;top:1083px;color:#000">268.8</div><div class="t f" style="left:973px;top:1083px;color:#000">ng/µl</div><div class="t f" style="left:1031px;top:1083px;color:#000">6.721</div><div class="t f" style="left:1136px;top:1083px;color:#000">3.219</div><div class="t f" style="left:1241px;top:1083px;color:#000">2.09</div><div class="t f" style="left:1326px;top:1083px;color:#000">2.00</div><div class="t f" style="left:1411px;top:1083px;color:#000">RNA</div><div class="t f" style="left:1529px;top:1083px;color:#000">40.00</div><div class="t f" style="left:469.2px;top:1104px;color:#000">26</div><div class="t f" style="left:510px;top:1104px;color:#000">D07 08 control</div><div class="t f" style="left:628px;top:1104px;color:#000">TP-SSV</div><div class="t f" style="left:733px;top:1104px;color:#000">11.10.2024 13:23</div><div class="t f" style="left:861px;top:1104px;color:#000">516.6</div><div class="t f" style="left:973px;top:1104px;color:#000">ng/µl</div><div class="t f" style="left:1031px;top:1104px;color:#000">12.916</div><div class="t f" style="left:1136px;top:1104px;color:#000">6.030</div><div class="t f" style="left:1241px;top:1104px;color:#000">2.14</div><div class="t f" style="left:1326px;top:1104px;color:#000">2.25</div><div class="t f" style="left:1411px;top:1104px;color:#000">RNA</div><div class="t f" style="left:1529px;top:1104px;color:#000">40.00</div><div class="t f" style="left:469.2px;top:1125px;color:#000">27</div><div class="t f" style="left:510px;top:1125px;color:#000">D07</div><div class="t f" style="left:628px;top:1125px;color:#000">TP-SSV</div><div class="t f" style="left:733px;top:1125px;color:#000">11.10.2024 13:26</div><div class="t f" style="left:861px;top:1125px;color:#000">1.0</div><div class="t f" style="left:973px;top:1125px;color:#000">ng/µl</div><div class="t f" style="left:1031px;top:1125px;color:#000">0.026</div><div class="t f" style="left:1136px;top:1125px;color:#000">0.002</div><div class="t f" style="left:1241px;top:1125px;color:#000">16.69</div><div class="t f" style="left:1326px;top:1125px;color:#000">1.18</div><div class="t f" style="left:1411px;top:1125px;color:#000">RNA</div><div class="t f" style="left:1529px;top:1125px;color:#000">40.00</div><div class="t f" style="left:469.2px;top:1146px;color:#000">28</div><div class="t f" style="left:510px;top:1146px;color:#000">D05 D06 control</div><div class="t f" style="left:628px;top:1146px;color:#000">TP-SSV</div><div class="t f" style="left:733px;top:1146px;color:#000">11.10.2024 13:29</div><div class="t f" style="left:861px;top:1146px;color:#000">529.1</div><div class="t f" style="left:973px;top:1146px;color:#000">ng/µl</div><div class="t f" style="left:1031px;top:1146px;color:#000">13.228</div><div class="t f" style="left:1136px;top:1146px;color:#000">6.239</div><div class="t f" style="left:1241px;top:1146px;color:#000">2.12</div><div class="t f" style="left:1326px;top:1146px;color:#000">2.20</div><div class="t f" style="left:1411px;top:1146px;color:#000">RNA</div><div class="t f" style="left:1529px;top:1146px;color:#000">40.00</div><div class="t f" style="left:469.2px;top:1167px;color:#000">29</div><div class="t f" style="left:510px;top:1167px;color:#000">D06</div><div class="t f" style="left:628px;top:1167px;color:#000">TP-SSV</div><div class="t f" style="left:733px;top:1167px;color:#000">11.10.2024 13:33</div><div class="t f" style="left:861px;top:1167px;color:#000">325.2</div><div class="t f" style="left:973px;top:1167px;color:#000">ng/µl</div><div class="t f" style="left:1031px;top:1167px;color:#000">8.129</div><div class="t f" style="left:1136px;top:1167px;color:#000">3.836</div><div class="t f" style="left:1241px;top:1167px;color:#000">2.12</div><div class="t f" style="left:1326px;top:1167px;color:#000">1.97</div><div class="t f" style="left:1411px;top:1167px;color:#000">RNA</div><div class="t f" style="left:1529px;top:1167px;color:#000">40.00</div><div class="t f" style="left:469.2px;top:1188px;color:#fff">30</div><div class="t f" style="left:510px;top:1188px;color:#fff">D05</div><div class="t f" style="left:628px;top:1188px;color:#fff">TP-SSV</div><div class="t f" style="left:733px;top:1188px;color:#fff">11.10.2024 13:35</div><div class="t f" style="left:861px;top:1188px;color:#fff">235.8</div><div class="t f" style="left:973px;top:1188px;color:#fff">ng/µl</div><div class="t f" style="left:1031px;top:1188px;color:#fff">5.895</div><div class="t f" style="left:1136px;top:1188px;color:#fff">2.785</div><div class="t f" style="left:1241px;top:1188px;color:#fff">2.12</div><div class="t f" style="left:1326px;top:1188px;color:#fff">0.94</div><div class="t f" style="left:1411px;top:1188px;color:#fff">RNA</div><div class="t f" style="left:1529px;top:1188px;color:#fff">40.00</div><div class="a" style="left:0;top:994px;width:459px;height:6px;background:linear-gradient(#ececec,#cfcfcf 45%,#929292)"></div><div class="a" style="left:0;top:1000px;width:459px;height:225px;background:#f6f6f6"></div><svg class="a" style="left:209px;top:995px" width="42" height="4" viewBox="0 0 42 4"><rect x="1.0" y="1" width="1.6" height="1.6" fill="#fff"/><rect x="1.8" y="0.3" width="1" height="1" fill="#f4f4f4"/><rect x="4.4" y="1" width="1.6" height="1.6" fill="#fff"/><rect x="5.2" y="0.3" width="1" height="1" fill="#f4f4f4"/><rect x="7.8" y="1" width="1.6" height="1.6" fill="#fff"/><rect x="8.6" y="0.3" width="1" height="1" fill="#f4f4f4"/><rect x="11.2" y="1" width="1.6" height="1.6" fill="#fff"/><rect x="12.0" y="0.3" width="1" height="1" fill="#f4f4f4"/><rect x="14.6" y="1" width="1.6" height="1.6" fill="#fff"/><rect x="15.4" y="0.3" width="1" height="1" fill="#f4f4f4"/><rect x="18.0" y="1" width="1.6" height="1.6" fill="#fff"/><rect x="18.8" y="0.3" width="1" height="1" fill="#f4f4f4"/><rect x="21.4" y="1" width="1.6" height="1.6" fill="#fff"/><rect x="22.2" y="0.3" width="1" height="1" fill="#f4f4f4"/><rect x="24.8" y="1" width="1.6" height="1.6" fill="#fff"/><rect x="25.6" y="0.3" width="1" height="1" fill="#f4f4f4"/><rect x="28.2" y="1" width="1.6" height="1.6" fill="#fff"/><rect x="29.0" y="0.3" width="1" height="1" fill="#f4f4f4"/><rect x="31.6" y="1" width="1.6" height="1.6" fill="#fff"/><rect x="32.4" y="0.3" width="1" height="1" fill="#f4f4f4"/><rect x="35.0" y="1" width="1.6" height="1.6" fill="#fff"/><rect x="35.8" y="0.3" width="1" height="1" fill="#f4f4f4"/><rect x="38.4" y="1" width="1.6" height="1.6" fill="#fff"/><rect x="39.2" y="0.3" width="1" height="1" fill="#f4f4f4"/></svg><div class="nav" style="top:1002px;height:29px;"><span>Home</span></div><div class="nav" style="top:1034px;height:29px;background:#cce4f7;border-color:#2f74b8;"><span>Measure Nucleic Acid</span></div><div class="nav" style="top:1066px;height:29px;"><span>Reports</span></div><div class="nav" style="top:1098px;height:29px;"><span>My Data</span></div><div class="nav" style="top:1130px;height:29px;"><span>Oligo Calc</span></div><div class="nav" style="top:1162px;height:29px;"><span>Options</span></div><svg class="a" style="left:0;top:1000px" width="50" height="195" viewBox="0 1000 50 195">
<defs>
<linearGradient id="hr" x1="0" y1="0" x2="1" y2="1"><stop offset="0" stop-color="#f0a53a"/><stop offset="1" stop-color="#c47416"/></linearGradient>
<linearGradient id="hw" x1="0" y1="0" x2="1" y2="0"><stop offset="0" stop-color="#ffffff"/><stop offset="1" stop-color="#d9e2ea"/></linearGradient>
<linearGradient id="tb" x1="0" y1="0" x2="1" y2="1"><stop offset="0" stop-color="#ffffff"/><stop offset="1" stop-color="#b9bcc2"/></linearGradient>
<linearGradient id="cb" x1="0" y1="0" x2="1" y2="1"><stop offset="0" stop-color="#6ea3e2"/><stop offset="1" stop-color="#2f66b4"/></linearGradient>
<linearGradient id="op" x1="0" y1="0" x2="0" y2="1"><stop offset="0" stop-color="#eef5fb"/><stop offset="1" stop-color="#a9c9e4"/></linearGradient>
<radialGradient id="og" cx="40%" cy="35%" r="65%"><stop offset="0" stop-color="#bff0c0"/><stop offset="0.45" stop-color="#35b045"/><stop offset="1" stop-color="#15752a"/></radialGradient>
<radialGradient id="ob" cx="40%" cy="35%" r="65%"><stop offset="0" stop-color="#ffffff"/><stop offset="1" stop-color="#a9cfe8"/></radialGradient>
</defs>
<!-- Home -->
<path d="M9.200 1019.400L13.500 1018L22.700 1024.200L36.600 1021.200L36.600 1022.200L20 1026.700Z" fill="#1c6c9a"/>
<path d="M13.500 1009.900L17.600 1007L22.700 1013.900L22.700 1024.300L13.500 1019Z" fill="#4aa0d6"/>
<path d="M16.800 1014.300L19.400 1015.600L19.400 1018.600L16.800 1017.400Z" fill="#1f5f8e"/>
<path d="M22.700 1013.900L36.600 1011L36.600 1021.200L22.700 1024.500Z" fill="url(#hw)"/>
<path d="M28.600 1015.200L31.500 1014.600L31.500 1022.400L28.600 1023.100Z" fill="#2a6f9e"/>
<path d="M17.200 1004.400H20.900V1007.600H17.200Z" fill="#b8680f"/>
<path d="M12.100 1009.900L17.600 1005.500L32.600 1004.800L38.100 1011L22.700 1014.300L17.600 1007.200L13.200 1010.800Z" fill="url(#hr)"/>
<!-- Tape measure -->
<path d="M9.500 1050.500C9.500 1053.500 11.500 1055.300 14.500 1055.300L19.500 1054.500L18 1050Z" fill="#1a1a1a"/>
<path d="M13.500 1035.600L21.500 1035.600C24 1035.600 25.300 1037.500 25.300 1040.500L25.300 1049L20 1054.200L14.500 1054.200C11.500 1054.200 9.900 1050 9.900 1044.500C9.900 1039 11.200 1035.600 13.500 1035.600Z" fill="url(#tb)" stroke="#9a9ca2" stroke-width="0.500"/>
<ellipse cx="15" cy="1044" rx="3.300" ry="6.800" fill="#d9dade" stroke="#8e9096" stroke-width="0.600"/>
<ellipse cx="15.400" cy="1044" rx="2.200" ry="5.400" fill="#f4f4f6"/>
<path d="M21.200 1039.900H25.600V1047.600H21.200Z" fill="#f4b51c" stroke="#c98d10" stroke-width="0.400"/>
<path d="M19.800 1051.200L23 1049L37.600 1055.200L33.500 1057.800Z" fill="#f6da48" stroke="#c9a820" stroke-width="0.400"/>
<path d="M24 1051.500L22.800 1052.500M27 1052.800L25.800 1053.800M30 1054.100L28.800 1055.100M33 1055.300L31.800 1056.300" stroke="#a8871a" stroke-width="0.500"/>
<path d="M32.200 1057.200L37.800 1055.200L38 1057.600L33 1059.600Z" fill="#d4d6da" stroke="#9a9ca2" stroke-width="0.400"/>
<!-- Reports -->
<rect x="15.400" y="1068.400" width="15" height="18" rx="0.800" fill="#e5344a" stroke="#a31628" stroke-width="0.700"/>
<path d="M13.200 1071H16.600M13.200 1073.500H16.600M13.200 1076H16.600M13.200 1078.500H16.600M13.200 1081H16.600M13.200 1083.500H16.600" stroke="#3a0a10" stroke-width="0.900"/>
<rect x="21.200" y="1072.500" width="15.400" height="19" rx="0.800" fill="#ee4358" stroke="#a31628" stroke-width="0.700"/>
<rect x="24.900" y="1076.500" width="6.600" height="3.700" rx="0.800" fill="#fff" stroke="#b02a3a" stroke-width="0.500"/>
<path d="M19 1075.500H22.600M19 1078H22.600M19 1080.500H22.600M19 1083H22.600M19 1085.500H22.600M19 1088H22.600" stroke="#3a0a10" stroke-width="0.900"/>
<!-- My Data -->
<path d="M11.300 1119L14.600 1119.500L21.900 1123.400L18 1123.400Z" fill="#20242c"/>
<path d="M14.600 1099.300L18.300 1101.100L18.300 1123.100L14.600 1120.200Z" fill="#4d586c"/>
<path d="M14.600 1099.300L31.500 1098.900L33.700 1101.100L18.300 1101.500Z" fill="#c0c9d8"/>
<path d="M18.300 1101.300L33.700 1101.100L33.700 1112L18.300 1112.200Z" fill="#9aa7be"/>
<rect x="24.200" y="1103.300" width="3.700" height="1.600" fill="#f2f4f7"/>
<path d="M22 1107.700L24.200 1107L34.400 1109.500L34.400 1112.500L22 1112.500Z" fill="#f5d85c" stroke="#c9a62a" stroke-width="0.400"/>
<path d="M19.400 1111.700L36.600 1112.500L36.600 1123.500L19.400 1122.700Z" fill="#a7b3c8" stroke="#6a778e" stroke-width="0.500"/>
<rect x="27.100" y="1115.400" width="4.400" height="1.900" rx="0.500" fill="#f2f4f7"/>
<path d="M27.100 1119.300L31.500 1119.700" stroke="#6a778e" stroke-width="0.800"/>
<!-- Oligo Calc -->
<path d="M27 1130C34 1134 36 1137 32 1141C28 1145 28 1148 33 1152C36 1154.500 36 1156 34 1158" fill="none" stroke="#f07a20" stroke-width="2.300"/>
<path d="M37.500 1130C31 1134 29 1137 33 1141C37 1145 37 1148 32 1152C29 1154.500 28 1156 29 1158" fill="none" stroke="#f28a30" stroke-width="2.300"/>
<path d="M29.500 1132.500H35.500M30.500 1149.500H35M30 1155.500H34" stroke="#2a6fb5" stroke-width="1.200"/>
<path d="M9.200 1137.600L10.200 1139.800L20 1157.200L19.400 1156.400Z" fill="#1f3f7a"/>
<path d="M9.200 1137L24.200 1131.100L35.100 1148.700L19.400 1156.400Z" fill="url(#cb)" stroke="#1f4a90" stroke-width="0.600"/>
<path d="M19.400 1156.400L35.100 1148.700L35.300 1149.900L19.800 1157.600Z" fill="#1f3f7a"/>
<path d="M13.500 1137L22 1133.700L23.400 1136.600L15 1140Z" fill="#dcebf9"/>
<path d="M15.700 1142.900L29.300 1138.500L33 1146.500L19.800 1151.700Z" fill="#eef4fb" opacity="0.920"/>
<path d="M17 1145.400L30.400 1141M18.300 1148L31.700 1143.600M19.200 1141.800L23.300 1150.400M22.600 1140.700L26.700 1149.100M26 1139.600L30 1147.800" stroke="#5a8fd6" stroke-width="0.700"/>
<!-- Options -->
<rect x="12.100" y="1167.400" width="18.300" height="16.400" fill="url(#op)" stroke="#4a7fa8" stroke-width="0.800"/>
<circle cx="17.900" cy="1166.300" r="3.200" fill="url(#ob)" stroke="#5a8ab0" stroke-width="0.600"/>
<circle cx="17.900" cy="1184.900" r="3.200" fill="url(#ob)" stroke="#5a8ab0" stroke-width="0.600"/>
<circle cx="17.600" cy="1176.200" r="3.400" fill="url(#og)" stroke="#1a6a2a" stroke-width="0.500"/>
<path d="M19.800 1172.100L22.300 1170.300L24.500 1174C27.500 1170.500 31 1167.500 34.400 1166.300L38 1165.500L36.600 1168.500C33.500 1169.500 29 1174 24.900 1179.800L22.700 1179.400Z" fill="#df151a" stroke="#9a0c10" stroke-width="0.400"/>
</svg><div class="a" style="left:0;top:1193px;width:459px;height:30px;background:linear-gradient(#fbfbfb,#f0f0f0);border:1px solid #8f8f8f;border-bottom-color:#707070;border-top-color:#9c9c9c;border-right-color:#9a9a9a;box-sizing:border-box"></div><svg class="a" style="left:439px;top:1201px" width="11" height="13" viewBox="0 0 11 13"><path d="M1.5 1L5 4L1.5 7M5.5 1L9 4L5.5 7" fill="none" stroke="#111" stroke-width="1.1"/><path d="M3.5 10H7.5L5.5 12.3Z" fill="#111"/></svg><div class="a" style="left:0;top:1223px;width:460px;height:3px;background:#f1f1f1"></div><div class="a" style="left:0;top:1224px;width:1920px;height:22px;background:#f1f1f1;border-top:1px solid #e6e6ea;box-sizing:border-box"></div><svg class="a" style="left:52px;top:1227px" width="16" height="17" viewBox="0 0 16 17"><path d="M8 0.5C10 2 12.5 2.7 15 2.8C15.3 9 13 13.5 8 16.3C3 13.5 0.7 9 1 2.8C3.5 2.7 6 2 8 0.5Z" fill="#9aa19a" stroke="#7b827b" stroke-width="0.6"/><path d="M8 2.4C9.7 3.5 11.5 4 13.4 4.2C13.5 8.8 11.8 12.2 8 14.4C4.2 12.2 2.5 8.8 2.6 4.2C4.5 4 6.3 3.5 8 2.4Z" fill="#3fae4f"/><path d="M5 8.3L7.2 10.4L11.2 6" fill="none" stroke="#fff" stroke-width="1.4"/></svg><div class="t" style="left:1866.5px;top:1231px;font-size:11.4px;letter-spacing:-0.6px">TP-SSV</div><div class="a" style="left:0;top:1246px;width:1920px;height:48px;background:linear-gradient(90deg,#e3ebf7 0%,#d6e0f6 25%,#d3dbf5 45%,#d9e2f6 70%,#dcebfa 100%);border-top:1px solid #c3c8d6;box-sizing:border-box"></div><svg class="a" style="left:18px;top:1251px" width="30" height="34" viewBox="0 0 30 34">
<defs><linearGradient id="nw" x1="0" y1="0" x2="1" y2="1"><stop offset="0" stop-color="#ff8a5c"/><stop offset="0.5" stop-color="#f0457a"/><stop offset="1" stop-color="#b14ae0"/></linearGradient></defs>
<rect x="2" y="13" width="18" height="15" rx="2.5" fill="#c85ad8" transform="rotate(-12 11 20)"/>
<rect x="4" y="12" width="19" height="15" rx="2.5" fill="url(#nw)"/>
<path d="M7 18.5L11 16V23L7 20.8Z" fill="#fff"/><rect x="12.5" y="17" width="8" height="1.6" fill="#fff"/><rect x="12.5" y="20.2" width="8" height="1.6" fill="#fff"/>
<circle cx="19.5" cy="8.5" r="7.5" fill="#c42b1c"/>
</svg><div class="t" style="left:34.5px;top:1254px;font-size:11px;color:#fff;">1</div><div class="t" style="left:50px;top:1257px;font-size:11.8px;color:#222;">Breaking news</div><div class="t" style="left:50px;top:1273px;font-size:11.8px;color:#5f6368;">Nobel peace pri...</div><svg class="a" style="left:704.5px;top:1258.5px" width="24" height="24" viewBox="0 0 24 24">
<defs><linearGradient id="wl" x1="0" y1="0" x2="1" y2="1"><stop offset="0" stop-color="#4cc2f1"/><stop offset="1" stop-color="#0f78d4"/></linearGradient></defs>
<rect x="0.5" y="0.5" width="11" height="11" fill="url(#wl)"/><rect x="12.5" y="0.5" width="11" height="11" fill="url(#wl)"/><rect x="0.5" y="12.5" width="11" height="11" fill="url(#wl)"/><rect x="12.5" y="12.5" width="11" height="11" fill="url(#wl)"/></svg><div class="a" style="left:742px;top:1254px;width:218px;height:32px;border-radius:16px;background:#f2f5fc;border:1px solid #cfd6e6;box-sizing:border-box"></div><svg class="a" style="left:751px;top:1262px" width="18" height="18" viewBox="0 0 18 18"><circle cx="7.5" cy="7.5" r="5.3" fill="none" stroke="#222" stroke-width="1.6"/><path d="M11.5 11.5L16 16" stroke="#222" stroke-width="1.8" stroke-linecap="round"/></svg><div class="t" style="left:778px;top:1264px;font-size:13.2px;color:#555;">Search</div><svg class="a" style="left:906px;top:1254px" width="56" height="32" viewBox="0 0 56 32">
<path d="M3 14L7 12L6 8L10 10L12 7L13 12L10 15L12 19L7 17L4 19Z" fill="#e98a1a"/>
<ellipse cx="24" cy="18" rx="11.5" ry="9.5" fill="#f07a1c"/><ellipse cx="18" cy="18" rx="5" ry="9" fill="#e4661a"/><ellipse cx="30" cy="18" rx="5" ry="9" fill="#e4661a"/><ellipse cx="24" cy="18" rx="4.5" ry="9.5" fill="#f58b2a"/>
<path d="M23 9C23 6 24 5 26 4L27 6C25.5 6.5 25.3 8 25.3 9Z" fill="#4c8a2a"/>
<path d="M17.5 15L21.5 14.5L20 18ZM30.5 15L26.5 14.5L28 18ZM17 21C21 24 27 24 31 21C28 26.5 20 26.5 17 21Z" fill="#3a1a08"/>
<path d="M33 2L52 10M35 1L45 22M40 0L38 14M33 2C39 4 44 4 52 2M34 6C40 9 45 8 51 6M36 11C40 14 45 13 49 12M37 16C41 18 44 18 47 17" fill="none" stroke="#c9a8d8" stroke-width="0.8"/>
</svg><svg class="a" style="left:972px;top:1258px" width="26" height="24" viewBox="0 0 26 24"><rect x="9" y="1" width="15" height="14" rx="1.5" fill="#fafafa" stroke="#dcdcdc" stroke-width="0.6"/><rect x="2" y="7" width="16" height="15" rx="1.5" fill="#1c1c1c"/><rect x="9" y="7" width="9" height="8" fill="#bdbdbd"/></svg><svg class="a" style="left:1060px;top:1258px" width="26" height="26" viewBox="0 0 26 26">
<defs><linearGradient id="e1" x1="0" y1="0" x2="0.6" y2="1"><stop offset="0" stop-color="#2a8fe0"/><stop offset="1" stop-color="#0c4f9e"/></linearGradient><linearGradient id="e2" x1="0" y1="0" x2="1" y2="0.3"><stop offset="0" stop-color="#2fb5e8"/><stop offset="0.55" stop-color="#3fcf8e"/><stop offset="1" stop-color="#7be05a"/></linearGradient></defs>
<path d="M13 1C20 1 25 6 25 11.500C25 15.500 22 18 18.500 18C16 18 14.500 17 14.500 15.800C14.500 15 15.500 14.600 15.500 13C15.500 10.800 13.500 9 10.500 9C5.500 9 1.500 13 1.200 17C0 8 5.500 1 13 1Z" fill="url(#e2)"/>
<path d="M10.500 9C7 9.500 5 12.500 5.500 16.500C6.200 21 10 24.800 15 24.800C18 24.800 21 23.500 22.800 21.200C19.500 23 15.500 22.500 13 20C10.500 17.500 9.800 14.500 10.800 12.200C11.200 11 10.800 9.500 10.500 9Z" fill="url(#e1)"/>
<path d="M1.200 17C1.500 13 5.500 9 10.500 9C8 10.500 7 13.500 7.800 17C8.800 21 12.500 24 17 24C19.500 24 21.500 23.200 22.800 21.200C20.500 24.500 16.500 26 12.500 25.500C6.500 24.800 1.800 21.500 1.200 17Z" fill="#1b66c0"/>
</svg><div class="a" style="left:1098px;top:1250px;width:38px;height:40px;border-radius:4px;background:#eef1fa;border:1px solid #e4e8f3;box-sizing:border-box"></div><svg class="a" style="left:1105px;top:1258px" width="24" height="24" viewBox="0 0 24 24">
<rect x="1" y="0" width="22" height="24" rx="1" fill="#5f7fd0"/>
<path d="M0 0H24V5L17 8H7L0 5Z" fill="#0a0a0a"/><path d="M0 24H24V19L18 16H6L0 19Z" fill="#0a0a0a"/>
<rect x="6" y="9" width="12" height="6" fill="#9db8ee"/><rect x="9" y="10.5" width="6" height="3" fill="#2a3f9a"/>
</svg><div class="a" style="left:1109px;top:1286px;width:16px;height:3px;border-radius:1.5px;background:#1a73d6"></div><svg class="a" style="left:1148px;top:1258px" width="26" height="26" viewBox="0 0 26 26">
<path d="M12 1C19 1 24 6 23 12C22.5 15 20 16 17 15.5C14.5 15 13.5 17 14.5 19C15.5 21.5 13.5 23.5 10.5 23C4.500 22 1 17 1.5 11C2 5.5 6.5 1 12 1Z" fill="#3aa0d8"/>
<path d="M12 1C19 1 24 6 23 12C18 8 12 7 5 9C6.5 4.500 9 1 12 1Z" fill="#5cc0ee"/>
<circle cx="7.5" cy="9" r="2" fill="#3fba4a"/><circle cx="12.5" cy="5.5" r="2" fill="#f04a3a"/><circle cx="18" cy="8" r="2" fill="#f5c63a"/><circle cx="6.500" cy="15" r="2" fill="#e8f3fb"/>
<path d="M17 11L20.500 11L20 20L17.500 20Z" fill="#b9824a"/><path d="M17.3 20H20.2L20 25H17.700Z" fill="#7a5a3a"/><path d="M17 5L20.500 5L20.500 11L17 11Z" fill="#d9d9d9"/>
</svg><div class="a" style="left:1158px;top:1286px;width:6px;height:3px;border-radius:1.5px;background:#858a96"></div><svg class="a" style="left:1191px;top:1258px" width="28" height="26" viewBox="0 0 28 26">
<path d="M1 3.500C1 2.500 1.800 2 2.500 2H10L13 5H25C26 5 26.500 5.700 26.500 6.500V9H1Z" fill="#e9a91c"/>
<rect x="1" y="7" width="25.500" height="17" rx="1.500" fill="#fcd24e"/>
<path d="M1 22.500H26.500V22.500C26.500 23.300 26 24 25 24H2.500C1.600 24 1 23.300 1 22.500Z" fill="#e9b32e"/>
<rect x="8" y="19" width="11.500" height="5" rx="1" fill="#2a78d0"/>
</svg><div class="a" style="left:1202px;top:1286px;width:6px;height:3px;border-radius:1.5px;background:#858a96"></div><svg class="a" style="left:1688px;top:1265px" width="13" height="9" viewBox="0 0 13 9"><path d="M1.500 7L6.500 2L11.500 7" fill="none" stroke="#222" stroke-width="1.400"/></svg><div class="t" style="left:1722.5px;top:1265px;font-size:11.6px;letter-spacing:-0.5px;color:#222;">FRA</div><svg class="a" style="left:1762px;top:1261px" width="20" height="18" viewBox="0 0 20 18"><rect x="1" y="2.500" width="12.500" height="10.500" rx="1" fill="none" stroke="#222" stroke-width="1.200"/><path d="M5 16.500H12M8.500 13V16.500" stroke="#222" stroke-width="1.200"/><rect x="13" y="1" width="4" height="5" rx="1" fill="#dfe8f7" stroke="#222" stroke-width="1.100"/><path d="M15 6V16.500H12" fill="none" stroke="#222" stroke-width="1.200"/></svg><svg class="a" style="left:1786px;top:1262px" width="20" height="16" viewBox="0 0 20 16"><path d="M1.500 5.500H4.500L8.500 2V14L4.500 10.500H1.500Z" fill="none" stroke="#222" stroke-width="1.100" stroke-linejoin="round"/><path d="M10.500 5.500C11.700 7 11.700 9 10.500 10.500M12.800 3.800C14.800 6.200 14.800 9.800 12.800 12.200M15.200 2C18 5.500 18 10.500 15.200 14" fill="none" stroke="#222" stroke-width="1.100" stroke-linecap="round"/></svg><div class="t" style="left:1810px;width:67px;text-align:right;top:1256px;font-size:11.6px;color:#222;">13:35</div><div class="t" style="left:1810px;width:67px;text-align:right;top:1272px;font-size:11.6px;color:#222;">11.10.2024</div><svg class="a" style="left:1884px;top:1262px" width="16" height="17" viewBox="0 0 16 17"><path d="M8 0.800C11 0.800 13 3 13 6V9.500L14.800 12.500H1.200L3 9.500V6C3 3 5 0.800 8 0.800Z" fill="#0f4aa8"/><path d="M5.800 14H10.200C9.800 15.300 9 16 8 16C7 16 6.200 15.300 5.800 14Z" fill="#0f4aa8"/></svg><svg class="a" style="left:1798px;top:218px" width="12" height="12" viewBox="0 0 12 12"><path d="M1 6.500H11" stroke="#111" stroke-width="1"/></svg><svg class="a" style="left:1843px;top:218px" width="12" height="12" viewBox="0 0 12 12"><rect x="1.500" y="3.500" width="7" height="7" rx="1.500" fill="none" stroke="#111" stroke-width="1"/><path d="M3.500 3.500V3C3.500 2 4.200 1.500 5 1.500H9C10 1.500 10.500 2.200 10.500 3V7C10.500 7.800 10 8.500 9 8.500H8.500" fill="none" stroke="#111" stroke-width="1"/></svg><svg class="a" style="left:1889px;top:218px" width="12" height="12" viewBox="0 0 12 12"><path d="M1 1L11 11M11 1L1 11" stroke="#111" stroke-width="1.100"/></svg></body></html>
